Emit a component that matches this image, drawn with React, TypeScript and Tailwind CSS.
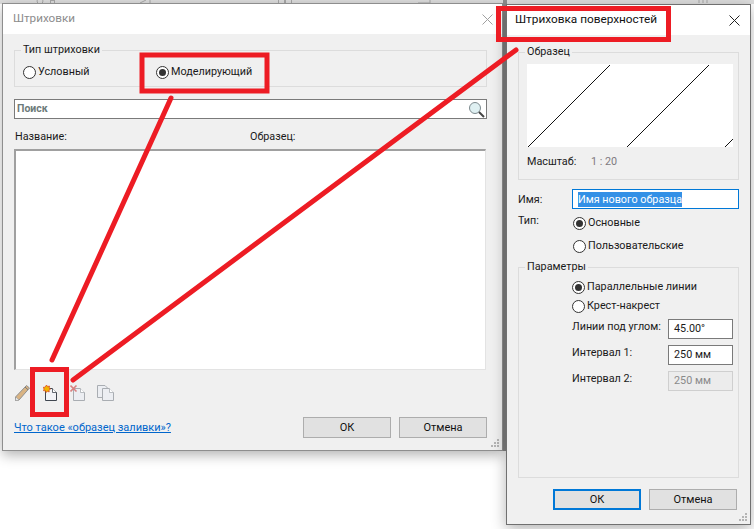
const font = { fontFamily: 'Roboto, "Noto Sans", sans-serif' };

function Radio({ checked, label, className = "" }: { checked?: boolean; label: string; className?: string }) {
  return (
    <div className={`flex items-center gap-[2px] text-[10.8px] leading-[16px] text-[#1a1a1a] ${className}`}>
      <span className="flex h-[13px] w-[13px] items-center justify-center rounded-full border border-[#333] bg-white">
        {checked && <span className="h-[7px] w-[7px] rounded-full bg-[#333]" />}
      </span>
      {label}
    </div>
  );
}

function Btn({ label, active, className = "" }: { label: string; active?: boolean; className?: string }) {
  return (
    <button
      className={`h-[21px] w-[88px] bg-[#e1e1e1] text-[11px] leading-none text-[#111] ${
        active ? "border-2 border-[#0078d7]" : "border border-[#adadad]"
      } ${className}`}
    >
      {label}
    </button>
  );
}

function Grip() {
  return (
    <svg width="10" height="10" viewBox="0 0 10 10" className="absolute right-[2px] bottom-[2px]">
      <g fill="#b4b4b4">
        <rect x="7" y="1" width="2" height="2" />
        <rect x="4" y="4" width="2" height="2" />
        <rect x="7" y="4" width="2" height="2" />
        <rect x="1" y="7" width="2" height="2" />
        <rect x="4" y="7" width="2" height="2" />
        <rect x="7" y="7" width="2" height="2" />
      </g>
    </svg>
  );
}

function CloseIcon({ color }: { color: string }) {
  return (
    <svg width="11" height="11" viewBox="0 0 11 11">
      <path d="M0.5 0.5L10.5 10.5M10.5 0.5L0.5 10.5" stroke={color} strokeWidth="1" fill="none" />
    </svg>
  );
}

function PageIcon({ x = 0, y = 0, dim }: { x?: number; y?: number; dim?: boolean }) {
  const stroke = dim ? "#a9adb2" : "#3f4650";
  return (
    <>
      <path
        d={`M${x + 0.5} ${y + 0.5}H${x + 7}L${x + 11.5} ${y + 4.5}V${y + 12.5}H${x + 0.5}Z`}
        fill={dim ? "#eceef2" : "#f2f3f7"}
        stroke={stroke}
      />
      <path d={`M${x + 7.5} ${y + 0.5}V${y + 4.5}H${x + 11.5}`} fill="#fff" stroke={stroke} strokeWidth="0.8" />
    </>
  );
}

function Toolbar() {
  return (
    <div className="mt-[10px] flex h-[22px] items-center pl-[1px]">
      <svg width="16" height="20" viewBox="0 0 16 20">
        <path d="M0.5 16L11.5 4.5L14.5 7L4 19L0.5 19.5Z" fill="#d9b382" stroke="#8f8f8f" />
        <path d="M10 6L13 8.8" stroke="#777" />
        <path d="M0.5 19.5L1 16L4 19Z" fill="#f3f3f3" stroke="#999" strokeWidth="0.6" />
      </svg>
      <svg width="16" height="20" viewBox="0 0 16 20" className="ml-[12px]">
        <PageIcon x={2} y={7} />
        <g transform="translate(0 4)">
          <path d="M3.5 0L4.6 1.6L6.5 1L6.2 3L7.5 4L6 5L6.2 7L4.4 6.2L3.2 7.5L2.4 5.8L0.3 5.6L1.2 4L0 2.4L2 2.2Z" fill="#f2b400" stroke="#d8401a" strokeWidth="0.7" />
        </g>
      </svg>
      <svg width="16" height="20" viewBox="0 0 16 20" className="ml-[11px]">
        <PageIcon x={3} y={7} dim />
        <path d="M0.5 4.5L6.5 10.5M6.5 4.5L0.5 10.5" stroke="#d98080" strokeWidth="1.6" />
      </svg>
      <svg width="17" height="20" viewBox="0 0 17 20" className="ml-[11px]">
        <path d="M0.5 4.5H8L11 7.5V16.5H0.5Z" fill="#eceef2" stroke="#a9adb2" />
        <PageIcon x={5} y={7} dim />
      </svg>
    </div>
  );
}

function HatchDialog() {
  return (
    <div className="absolute top-[3px] left-[2px] flex h-[448px] w-[501px] flex-col border border-[#8e8e8e] bg-[#f0f0f0] shadow-[0_4px_12px_rgba(0,0,0,0.3)]">
      <div className="flex h-[30px] items-center justify-between bg-white pr-[9px] pl-[10px] text-[11.7px] text-[#8c8c8c]">
        Штриховки
        <CloseIcon color="#a0a0a0" />
      </div>
      <div className="flex flex-1 flex-col pt-[16px] pr-[15px] pl-[11px]">
        <div className="relative h-[37px] border border-[#dcdcdc] px-[8px] pt-[13px]">
          <span className="absolute -top-[9px] left-[6px] bg-[#f0f0f0] px-[2px] text-[10.8px] leading-[16px] text-[#1a1a1a]">
            Тип штриховки
          </span>
          <div className="flex">
            <Radio label="Условный" className="w-[133px]" />
            <Radio checked label="Моделирующий" />
          </div>
        </div>
        <div className="mt-[12px] flex h-[20px] items-center justify-between border border-[#7a7a7a] bg-white pr-[1px] pl-[2px]">
          <span className="text-[10.5px] font-bold text-[#6d7a7a]">Поиск</span>
          <svg width="17" height="17" viewBox="0 0 17 17">
            <circle cx="7" cy="7" r="5.5" fill="#dff0f2" stroke="#7d8a8e" />
            <path d="M11 11L16 16" stroke="#444" strokeWidth="2" />
          </svg>
        </div>
        <div className="mt-[10px] flex h-[17px] items-center pl-[1px] text-[10.8px] text-[#1a1a1a]">
          <span className="w-[235px]">Название:</span>
          <span>Образец:</span>
        </div>
        <div className="mt-[3px] h-[221px] w-[472px] border-t-2 border-r border-b border-l-2 border-t-[#a0a0a0] border-r-[#e3e3e3] border-b-[#e3e3e3] border-l-[#a0a0a0] bg-white" />
        <Toolbar />
        <div className="mt-[15px] flex items-start justify-between">
          <a className="mt-[3px] text-[11px] leading-[16px] text-[#0066cc] underline">Что такое «образец заливки»?</a>
          <div className="flex gap-[8px]">
            <Btn label="ОК" />
            <Btn label="Отмена" />
          </div>
        </div>
      </div>
      <Grip />
    </div>
  );
}

function SurfaceDialog() {
  return (
    <div className="absolute top-[4px] left-[506px] flex h-[521px] w-[245px] flex-col border border-[#707070] bg-[#f0f0f0] shadow-[0_4px_14px_rgba(0,0,0,0.3)]">
      <div className="flex h-[30px] items-center justify-between bg-white pr-[10px] pl-[8px] text-[11.8px] text-[#111]">
        Штриховка поверхностей
        <CloseIcon color="#222" />
      </div>
      <div className="flex flex-1 flex-col px-[11px] pt-[17px]">
        <div className="relative h-[128px] border border-[#dcdcdc] pt-[11px] pl-[8px]">
          <span className="absolute -top-[9px] left-[6px] bg-[#f0f0f0] px-[2px] text-[10.8px] leading-[16px] text-[#1a1a1a]">
            Образец
          </span>
          <svg width="206" height="83" viewBox="0 0 206 83" className="bg-white">
            <path d="M1 83L83 1M100 83L182 1M198 83L206 75" stroke="#111" strokeWidth="1" fill="none" />
          </svg>
          <div className="mt-[7px] flex text-[10.8px] leading-[16px]">
            <span className="w-[64px] text-[#1a1a1a]">Масштаб:</span>
            <span className="text-[#7f7a80]">1 : 20</span>
          </div>
        </div>
        <div className="mt-[9px] flex h-[20px] items-center">
          <span className="w-[54px] pt-[2px] text-[10.8px] text-[#1a1a1a]">Имя:</span>
          <div className="flex h-[20px] w-[167px] items-center border border-[#0078d7] bg-white pl-[5px]">
            <span className="bg-[#3390e6] text-[10.8px] leading-[15px] text-white">Имя нового образца</span>
          </div>
        </div>
        <div className="mt-[4px] flex">
          <span className="w-[54px] text-[10.8px] leading-[16px] text-[#1a1a1a]">Тип:</span>
          <div className="flex flex-col gap-[7px] pt-[2px] pl-[1px]">
            <Radio checked label="Основные" />
            <Radio label="Пользовательские" />
          </div>
        </div>
        <div className="relative mt-[13px] h-[211px] border border-[#dcdcdc]">
          <span className="absolute -top-[9px] left-[6px] bg-[#f0f0f0] px-[2px] text-[10.8px] leading-[16px] text-[#1a1a1a]">
            Параметры
          </span>
          <div className="flex flex-col gap-[3px] pt-[11px] pl-[53px]">
            <Radio checked label="Параллельные линии" />
            <Radio label="Крест-накрест" />
            <div className="mt-[2px] flex flex-col gap-[6px] text-[10.8px] leading-[16px] text-[#1a1a1a]">
              <div className="flex">
                <span className="w-[96px]">Линии под углом:</span>
                <span className="flex h-[20px] w-[65px] items-center border border-[#7a7a7a] bg-white pl-[5px]">45.00°</span>
              </div>
              <div className="flex">
                <span className="w-[96px]">Интервал 1:</span>
                <span className="flex h-[20px] w-[65px] items-center border border-[#7a7a7a] bg-white pl-[5px]">250 мм</span>
              </div>
              <div className="flex">
                <span className="w-[96px]">Интервал 2:</span>
                <span className="flex h-[20px] w-[65px] items-center border border-[#cfcfcf] bg-[#ececec] pl-[5px] text-[#8a8a8a]">250 мм</span>
              </div>
            </div>
          </div>
        </div>
        <div className="mt-[11px] flex justify-end gap-[8px] pr-[2px]">
          <Btn label="ОК" active />
          <Btn label="Отмена" />
        </div>
      </div>
      <Grip />
    </div>
  );
}

export default function App() {
  return (
    <div className="relative h-[529px] w-[754px] overflow-hidden bg-white" style={font}>
      <div className="absolute top-0 left-0 h-[4px] w-[754px] bg-[#dedede]" />
      <div className="absolute top-0 left-[503px] h-[451px] w-[4px] bg-[#8f8f8f]" />
      <svg width="754" height="4" viewBox="0 0 754 4" className="absolute top-0 left-0">
        <g fill="none" stroke="#a8a8a8">
          <circle cx="40" cy="1" r="3" />
          <rect x="50.5" y="0.5" width="4" height="3" />
          <path d="M140 3L146 0M150 3V0" />
          <rect x="278.5" y="-2.5" width="6" height="6" />
          <rect x="285.5" y="-2.5" width="6" height="6" />
          <path d="M418 3H430M430 0V3M699 3V0M703 3V0M707 3V0" />
        </g>
      </svg>
      <HatchDialog />
      <SurfaceDialog />
      <svg width="754" height="529" viewBox="0 0 754 529" className="pointer-events-none absolute top-0 left-0">
        <g stroke="#ed1c24" fill="none">
          <path d="M171 98L52 360" strokeWidth="5" strokeLinecap="round" />
          <path d="M516 50L73 380" strokeWidth="5" strokeLinecap="round" />
          <rect x="142" y="55" width="125" height="36" strokeWidth="5" />
          <rect x="32.5" y="369.5" width="34" height="45" strokeWidth="5" />
          <rect x="498.5" y="8.5" width="170" height="31" strokeWidth="5" />
        </g>
      </svg>
    </div>
  );
}
